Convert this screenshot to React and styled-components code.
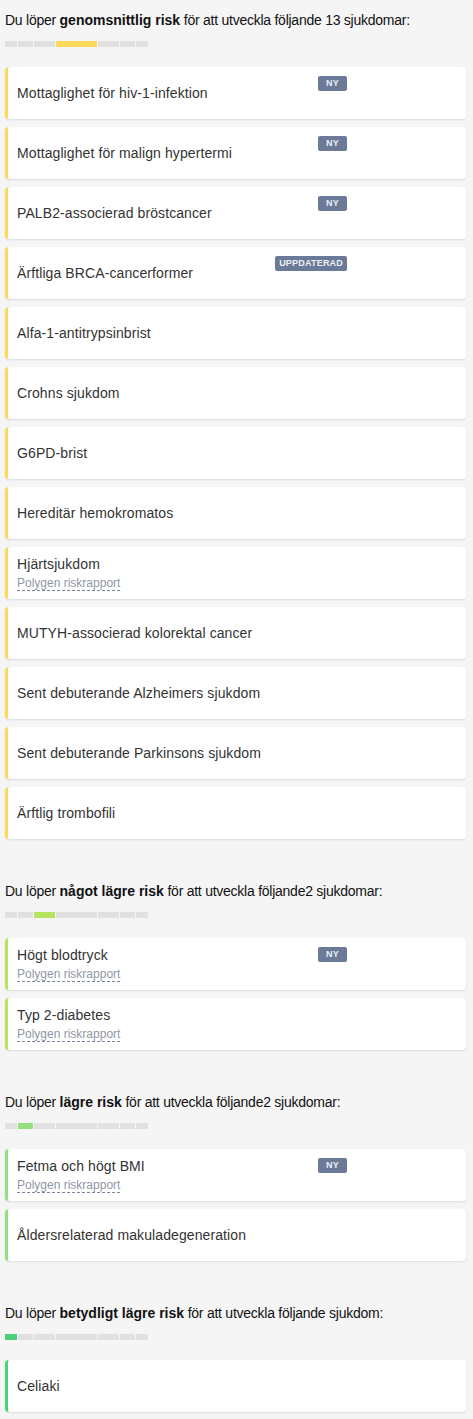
import React from "react";
import styled, { createGlobalStyle } from "styled-components";

const GlobalStyle = createGlobalStyle`
	body {
		margin: 0;
		background: #f5f5f5;
		font-family: "Liberation Sans", Arial, sans-serif;
	}
`;

// widths of the seven risk bar steps, lowest risk first
const STEPS = [12, 15, 21, 41, 21, 15, 12];

const sections = [
	{
		before: "Du löper ",
		strong: "genomsnittlig risk",
		after: " för att utveckla följande 13 sjukdomar:",
		step: 3,
		color: "#fdd85d",
		items: [
			{ title: "Mottaglighet för hiv-1-infektion", badge: "NY" },
			{ title: "Mottaglighet för malign hypertermi", badge: "NY" },
			{ title: "PALB2-associerad bröstcancer", badge: "NY" },
			{ title: "Ärftliga BRCA-cancerformer", badge: "UPPDATERAD" },
			{ title: "Alfa-1-antitrypsinbrist" },
			{ title: "Crohns sjukdom" },
			{ title: "G6PD-brist" },
			{ title: "Hereditär hemokromatos" },
			{ title: "Hjärtsjukdom", polygen: true },
			{ title: "MUTYH-associerad kolorektal cancer" },
			{ title: "Sent debuterande Alzheimers sjukdom" },
			{ title: "Sent debuterande Parkinsons sjukdom" },
			{ title: "Ärftlig trombofili" },
		],
	},
	{
		before: "Du löper ",
		strong: "något lägre risk",
		after: " för att utveckla följande2 sjukdomar:",
		step: 2,
		color: "#b6e45f",
		items: [
			{ title: "Högt blodtryck", badge: "NY", polygen: true },
			{ title: "Typ 2-diabetes", polygen: true },
		],
	},
	{
		before: "Du löper ",
		strong: "lägre risk",
		after: " för att utveckla följande2 sjukdomar:",
		step: 1,
		color: "#93e07f",
		items: [
			{ title: "Fetma och högt BMI", badge: "NY", polygen: true },
			{ title: "Åldersrelaterad makuladegeneration" },
		],
	},
	{
		before: "Du löper ",
		strong: "betydligt lägre risk",
		after: " för att utveckla följande sjukdom:",
		step: 0,
		color: "#4bcf78",
		items: [{ title: "Celiaki" }],
	},
];

export default function App() {
	return (
		<Page>
			<GlobalStyle />
			{sections.map((s) => (
				<Section key={s.strong}>
					<Heading>
						{s.before}
						<b>{s.strong}</b>
						{s.after}
					</Heading>
					<RiskBar>
						{STEPS.map((w, i) => (
							<Step key={i} $w={w} $color={i === s.step ? s.color : null} />
						))}
					</RiskBar>
					<CardList>
						{s.items.map((item) => (
							<Card key={item.title} $accent={s.color}>
								<CardTitle>{item.title}</CardTitle>
								{item.polygen && <Polygen>Polygen riskrapport</Polygen>}
								{item.badge && <Badge>{item.badge}</Badge>}
							</Card>
						))}
					</CardList>
				</Section>
			))}
		</Page>
	);
}

const Page = styled.div`
	display: flex;
	flex-direction: column;
	gap: 42px;
	padding: 10px 7px 7px 5px;
`;

const Section = styled.section`
	display: flex;
	flex-direction: column;
`;

const Heading = styled.p`
	margin: 0;
	font-size: 14px;
	line-height: 20px;
	letter-spacing: -0.25px;
	color: #111;
	& > b {
		font-weight: bold;
		letter-spacing: 0;
	}
`;

const RiskBar = styled.div`
	display: flex;
	gap: 1px;
	margin-top: 11px;
	height: 6px;
`;

const Step = styled.div`
	width: ${(p) => p.$w}px;
	height: 100%;
	background: ${(p) => p.$color || "#e1e1e1"};
`;

const CardList = styled.div`
	display: flex;
	flex-direction: column;
	gap: 8px;
	margin-top: 20px;
`;

const Card = styled.div`
	position: relative;
	box-sizing: border-box;
	min-height: 52px;
	display: flex;
	flex-direction: column;
	justify-content: center;
	padding: 0 12px 0 9px;
	background: #fff;
	border-left: 3px solid ${(p) => p.$accent};
	border-radius: 4px;
	box-shadow: 0 1px 2px rgba(0, 0, 0, 0.1);
`;

const CardTitle = styled.div`
	font-size: 14px;
	line-height: 18px;
	letter-spacing: 0.1px;
	color: #333;
`;

const Polygen = styled.span`
	align-self: flex-start;
	margin-top: 3px;
	font-size: 12px;
	line-height: 14px;
	color: #8f97a6;
	border-bottom: 1px dashed #7c869a;
`;

const Badge = styled.span`
	position: absolute;
	top: 9px;
	right: 119px;
	box-sizing: border-box;
	min-width: 29px;
	height: 15px;
	padding: 0 4px;
	border-radius: 2px;
	background: #6b7a99;
	color: #eef0f4;
	font-size: 9px;
	font-weight: bold;
	letter-spacing: 0.2px;
	line-height: 15px;
	text-align: center;
`;
